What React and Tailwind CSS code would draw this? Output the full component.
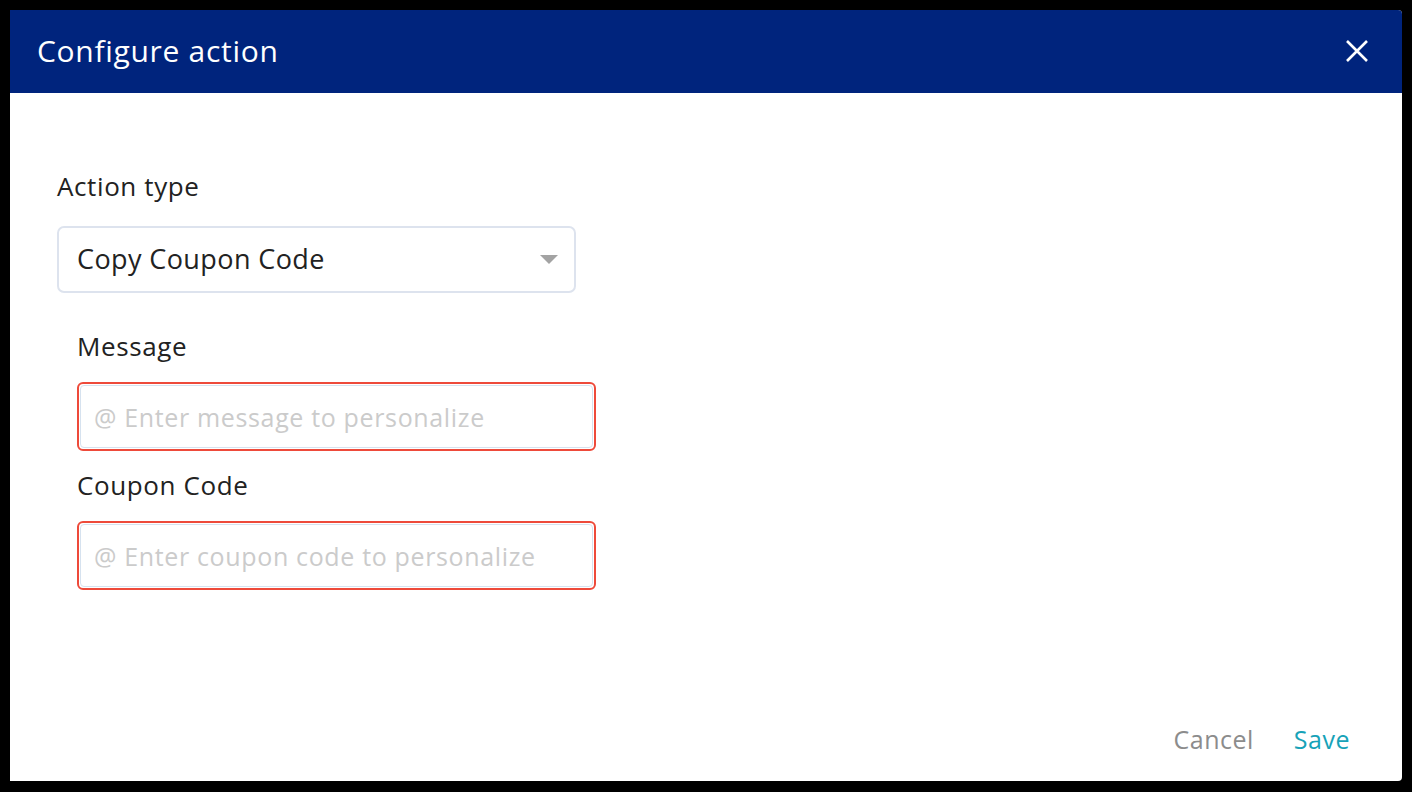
import React from "react";

const font = { fontFamily: '"Open Sans", "Liberation Sans", sans-serif' };

function Field({ label, placeholder }) {
    return (
        <div className="flex flex-col">
            <label className="text-[26px] leading-[32px] tracking-[0.6px] text-[#222]">{label}</label>
            <div className="mt-[20px] h-[69px] w-[519px] rounded-[6px] border-2 border-[#ee4a3a] p-px">
                <input
                    className="h-full w-full rounded-[4px] border border-[#d6e2ef] px-[13px] text-[25px] tracking-[0.65px] text-[#222] outline-none placeholder:text-[#cbcbcb]"
                    placeholder={placeholder}
                />
            </div>
        </div>
    );
}

export default function App() {
    return (
        <div className="h-[792px] w-[1412px] bg-black p-[10px]" style={font}>
            <div className="flex h-[771px] w-[1392px] flex-col overflow-hidden rounded-r-[4px] bg-white">

                {/* Header */}
                <div className="flex h-[83px] shrink-0 items-center justify-between bg-[#00247d] pb-[2px] pl-[27px] pr-[34px]">
                    <h1 className="text-[30px] tracking-[0.7px] text-white">Configure action</h1>
                    <button className="text-white">
                        <svg width="22" height="22" viewBox="0 0 22 22" fill="none" stroke="currentColor" strokeWidth="2.6">
                            <path d="M1 1L21 21M21 1L1 21" />
                        </svg>
                    </button>
                </div>

                {/* Body */}
                <div className="flex flex-1 flex-col pl-[47px] pt-[77px]">
                    <label className="text-[26px] leading-[32px] tracking-[0.6px] text-[#222]">Action type</label>
                    <div className="mt-[24px] flex h-[67px] w-[519px] items-center justify-between rounded-[7px] border-2 border-[#dde3ee] pl-[18px] pr-[16px]">
                        <span className="text-[27px] tracking-[0.4px] text-[#222]">Copy Coupon Code</span>
                        <svg width="18" height="9" viewBox="0 0 18 9">
                            <path d="M0 0H18L9 9Z" fill="#a3a3a3" />
                        </svg>
                    </div>

                    <div className="ml-[20px] mt-[37px] flex flex-col gap-[18px]">
                        <Field label="Message" placeholder="@ Enter message to personalize" />
                        <Field label="Coupon Code" placeholder="@ Enter coupon code to personalize" />
                    </div>
                </div>

                {/* Footer */}
                <div className="flex justify-end gap-[40px] pb-[23px] pr-[52px]">
                    <button className="text-[25px] tracking-[0.5px] text-[#8c8c8c]">Cancel</button>
                    <button className="text-[25px] tracking-[0.5px] text-[#17a2b8]">Save</button>
                </div>
            </div>
        </div>
    );
}
